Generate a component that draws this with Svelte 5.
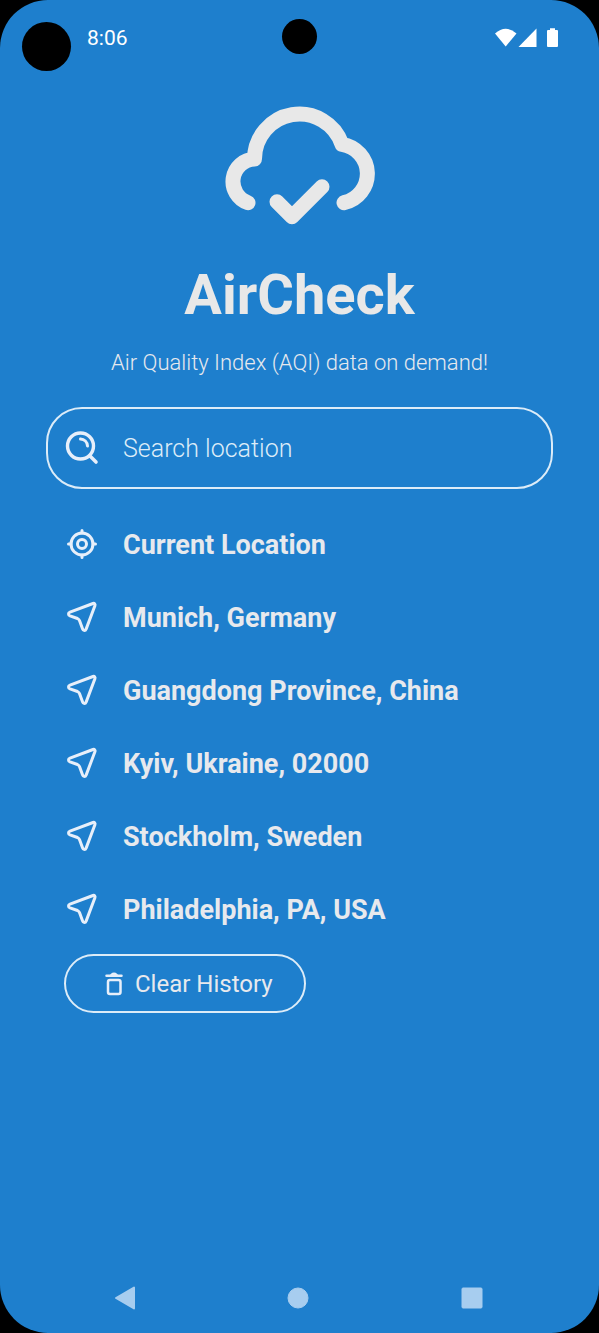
<script>
  let query = $state("");
  let history = $state([
    "Munich, Germany",
    "Guangdong Province, China",
    "Kyiv, Ukraine, 02000",
    "Stockholm, Sweden",
    "Philadelphia, PA, USA",
  ]);

  const selectLocation = (name) => {
    query = name;
  };

  const clearHistory = () => {
    history = [];
  };
</script>

<div class="screen">
  <span class="camera"></span>

  <header class="status-bar">
    <div class="clock">
      <span class="dot"></span>
      <span>8:06</span>
    </div>
    <svg class="status-icons" width="64" height="20" viewBox="0 0 64 20" fill="#fff" aria-hidden="true">
      <path d="M0 5.5 Q10.7 -4 21.5 5.5 L10.7 18.5 Z" />
      <path d="M41.5 .5 V19 H23.5 Z" />
      <path d="M55 .3 h5 v1.7 h2 a1 1 0 0 1 1 1 v15 a1 1 0 0 1 -1 1 h-9 a1 1 0 0 1 -1 -1 v-15 a1 1 0 0 1 1 -1 h2 z" />
    </svg>
  </header>

  <main>
    <svg class="logo" width="150" height="120" viewBox="0 0 150 120" aria-hidden="true">
      <path d="M23 96.7 A22.5 22.5 0 0 1 29.500 53 A45 45 0 0 1 117 38.3 A29.7 29.7 0 0 1 119 96.7" />
      <path d="M52 95.7 L67 110.7 L97 80.7" />
    </svg>

    <h1>AirCheck</h1>
    <p class="tagline">Air Quality Index (AQI) data on demand!</p>

    <label class="search">
      <svg class="icon" width="34" height="34" viewBox="0 0 34 34" aria-hidden="true">
        <circle cx="15.5" cy="15" r="13" stroke-width="3.4" />
        <path d="M25 25 L31 31" stroke-width="3.6" />
        <path d="M15.5 8 A7.5 7.5 0 0 1 22.500 15" />
      </svg>
      <input type="text" placeholder="Search location" aria-label="Search location" bind:value={query} />
    </label>

    <ul class="locations">
      <li>
        <button class="location" onclick={() => selectLocation("Current Location")}>
          <svg class="icon" width="34" height="34" viewBox="0 0 34 34" aria-hidden="true">
            <circle cx="17" cy="16" r="11" />
            <circle cx="17" cy="16" r="4.500" />
            <path d="M17 2.5 V5 M17 27 V29.5 M3.5 16 H6 M28 16 H30.5" />
          </svg>
          <span>Current Location</span>
        </button>
      </li>
      {#each history as name}
        <li>
          <button class="location" onclick={() => selectLocation(name)}>
            <svg class="icon" width="34" height="34" viewBox="0 0 34 34" aria-hidden="true">
              <path d="M28 2.5 L5 11.2 C3 12 3 14 5 14.800 L12.500 17.5 C13.6 18 14.1 18.6 14.500 19.6 L17.5 27.8 C18.2 30 20.4 30 21.2 27.900 L29.900 4.8 C30.5 3.2 29.5 2 28 2.5 Z" />
            </svg>
            <span>{name}</span>
          </button>
        </li>
      {/each}
    </ul>

    <button class="clear" onclick={clearHistory}>
      <svg class="icon" width="18" height="24" viewBox="0 0 18 24" aria-hidden="true">
        <path d="M1.5 3.7 H16.5" stroke-width="2.5" />
        <path d="M6.5 3 Q9 .8 11.5 3" stroke-width="2.5" />
        <rect x="3" y="8" width="12.5" height="14" rx="2" stroke-width="2.5" />
      </svg>
      <span>Clear History</span>
    </button>
  </main>

  <nav class="nav-bar">
    <button aria-label="Back">
      <svg width="24" height="26" viewBox="0 0 24 26" aria-hidden="true">
        <path d="M3 13 L21 2.5 V23.5 Z" stroke-width="2" />
      </svg>
    </button>
    <button aria-label="Home">
      <svg width="24" height="26" viewBox="0 0 24 26" aria-hidden="true">
        <circle cx="12" cy="13" r="10" />
      </svg>
    </button>
    <button aria-label="Recent apps">
      <svg width="24" height="26" viewBox="0 0 24 26" aria-hidden="true">
        <rect x="2" y="3" width="20" height="20" rx="1" />
      </svg>
    </button>
  </nav>
</div>

<style>
  :global(body) {
    background: #000;
  }

  .screen {
    position: relative;
    display: flex;
    flex-direction: column;
    min-height: 100vh;
    border-radius: 48px;
    background: #1e7fcd;
    color: #e7e9ed;
    font-family: Roboto, sans-serif;
  }

  .camera {
    position: absolute;
    top: 19px;
    left: 50%;
    width: 35px;
    height: 35px;
    margin-left: -18px;
    border-radius: 50%;
    background: #000;
  }

  .status-bar {
    display: flex;
    align-items: center;
    justify-content: space-between;
    height: 76px;
    padding: 0 40px 0 22px;
    color: #fff;
    font-size: 21px;
  }

  .clock {
    display: flex;
    align-items: center;
    gap: 16px;
  }

  .dot {
    width: 49px;
    height: 49px;
    margin-top: 16px;
    border-radius: 50%;
    background: #000;
  }

  main {
    display: flex;
    flex: 1;
    flex-direction: column;
    align-items: center;
    padding: 30px 46px 0;
  }

  .logo {
    overflow: visible;
    fill: none;
    stroke: #e8e8e8;
    stroke-width: 15;
    stroke-linecap: round;
    stroke-linejoin: round;
  }

  h1 {
    margin: 36px 0 0;
    color: #e8e8e8;
    font-size: 56px;
    font-weight: bold;
    line-height: 66px;
  }

  .tagline {
    margin: 22px 0 0;
    font-size: 22px;
    font-weight: 300;
    line-height: 26px;
  }

  button,
  input {
    border: 0;
    background: none;
    color: inherit;
    font-family: inherit;
  }

  button {
    cursor: pointer;
  }

  .icon {
    flex: none;
    fill: none;
    stroke: #e7effa;
    stroke-width: 3;
    stroke-linecap: round;
    stroke-linejoin: round;
  }

  .search {
    display: flex;
    align-items: center;
    align-self: stretch;
    gap: 24px;
    box-sizing: border-box;
    height: 82px;
    margin-top: 31px;
    padding: 0 17px;
    border: 2px solid #dcecf8;
    border-radius: 36px;
  }

  .search input {
    flex: 1;
    min-width: 0;
    padding: 0;
    outline: none;
    font-size: 25px;
    font-weight: 300;
  }

  .search input::placeholder {
    color: #dcecf8;
    opacity: 1;
  }

  .locations {
    align-self: stretch;
    margin: 19px 0 8px;
    padding: 0;
    list-style: none;
  }

  .location {
    display: flex;
    align-items: center;
    gap: 24px;
    width: 100%;
    height: 73px;
    padding: 0 19px;
    font-size: 27px;
    font-weight: bold;
    text-align: left;
  }

  .clear {
    display: flex;
    align-items: center;
    align-self: flex-start;
    gap: 12px;
    height: 59px;
    margin-left: 18px;
    padding: 0 31px 0 39px;
    border: 2px solid #dcecf8;
    border-radius: 30px;
    font-size: 24px;
  }

  .nav-bar {
    display: flex;
    justify-content: space-around;
    padding: 22px 40px 22px 38px;
  }

  .nav-bar button {
    display: flex;
    padding: 0;
  }

  .nav-bar svg {
    fill: #a7cdef;
    stroke: #a7cdef;
    stroke-linejoin: round;
  }
</style>
